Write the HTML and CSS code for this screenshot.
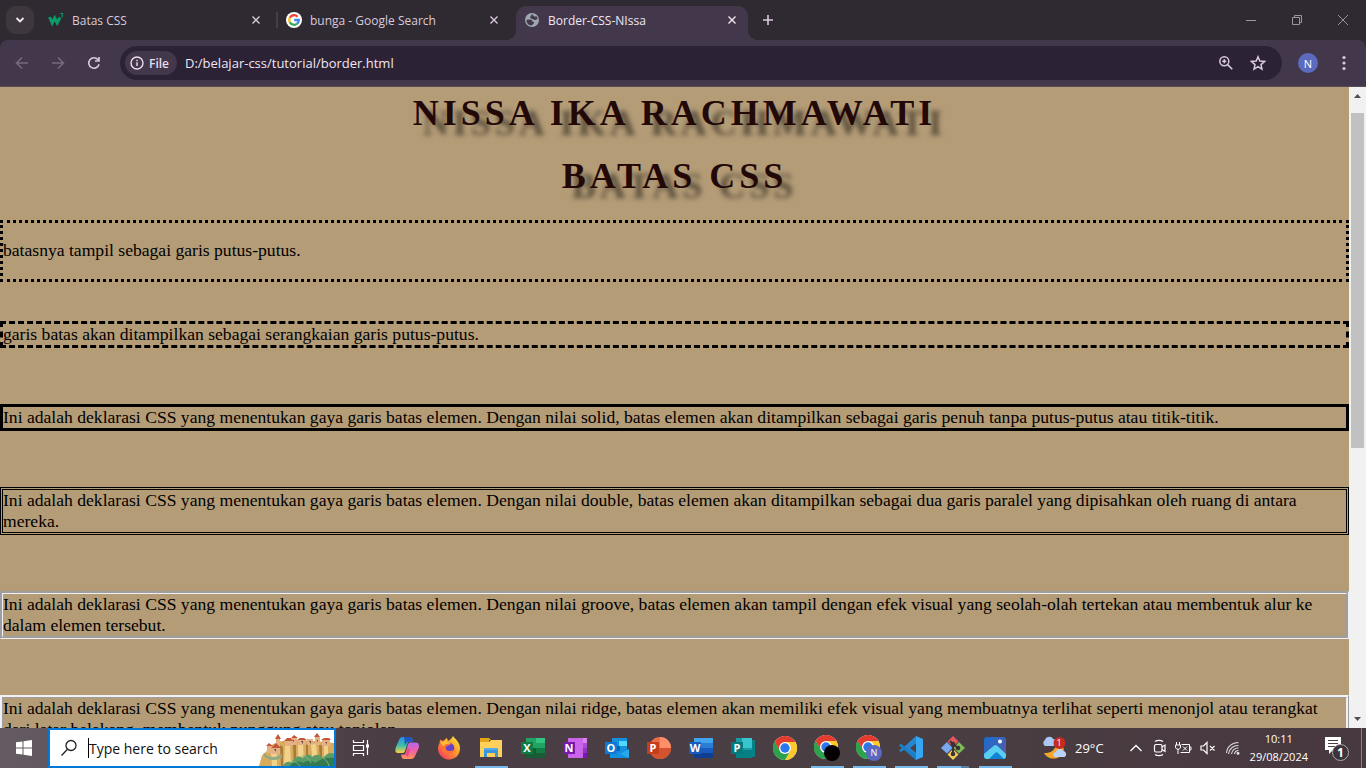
FILE: index.html
```html
<!DOCTYPE html>
<html lang="id">
<head>
<meta charset="utf-8">
<title>Border-CSS-NIssa</title>
<link rel="stylesheet" href="styles.css">
</head>
<body>
<svg class="defs" aria-hidden="true">
  <defs>
    <symbol id="close" viewBox="0 0 16 16"><path d="M4.500 4.500l7 7M11.500 4.500l-7 7" fill="none" stroke="currentColor" stroke-width="1.400"/></symbol>
    <symbol id="chrome" viewBox="0 0 24 24">
      <circle cx="12" cy="12" r="12" fill="#fff"/>
      <path d="M12 12L1.600 6A12 12 0 0 1 22.400 6H12z" fill="#e33b2e"/>
      <path d="M12 12L22.400 6A12 12 0 0 1 12 24l5.200-9z" fill="#fdc92b"/>
      <path d="M12 12l5.200 3L12 24A12 12 0 0 1 1.600 6l5.200 9z" fill="#2da14c"/>
      <path d="M12 6h10.400L17 15z" fill="#fdc92b"/><path d="M1.600 6L6.800 15 12 6z" fill="#e33b2e"/>
      <path d="M1.600 6l5.200 9 5.200 3-5 4.900A12 12 0 0 1 1.600 6z" fill="#2da14c"/>
      <circle cx="12" cy="12" r="6" fill="#fff"/><circle cx="12" cy="12" r="4.700" fill="#2b78ea"/>
    </symbol>
  </defs>
</svg>

<header class="browser">
  <div class="tabstrip">
    <button class="tab-search" aria-label="Search tabs"><svg width="12" height="12" viewBox="0 0 12 12"><path d="M2.500 4l3.500 3.500L9.500 4" fill="none" stroke="currentColor" stroke-width="1.800"/></svg></button>
    <div class="tab">
      <svg class="favicon" viewBox="0 0 16 16"><path d="M1.500 5l2.700 6 2.500-5 2.500 5L12 5.500" fill="none" stroke="#0a9b68" stroke-width="3"/><path d="M12.500 1.500h2.500l-1.300 1.700c2 0 1.700 2.300-.9 1.700" fill="none" stroke="#0a9b68"/></svg>
      <span class="tab-title">Batas CSS</span>
      <button class="tab-close" aria-label="Close tab"><svg width="16" height="16"><use href="#close"/></svg></button>
    </div>
    <div class="tab tab-divided">
      <svg class="favicon" viewBox="0 0 16 16"><circle cx="8" cy="8" r="8" fill="#fff"/><g fill="none" stroke-width="2.300"><path d="M11.500 4.700A4.800 4.800 0 0 0 3.800 5.700" stroke="#ea4335"/><path d="M3.800 5.700a4.800 4.800 0 0 0 0 4.600" stroke="#fbbc05"/><path d="M3.800 10.300a4.800 4.800 0 0 0 7.300 1.400" stroke="#34a853"/><path d="M11.100 11.700A4.800 4.800 0 0 0 12.800 8H8.200" stroke="#4285f4"/></g></svg>
      <span class="tab-title">bunga - Google Search</span>
      <button class="tab-close" aria-label="Close tab"><svg width="16" height="16"><use href="#close"/></svg></button>
    </div>
    <div class="tab tab-active">
      <svg class="favicon" viewBox="0 0 16 16"><circle cx="8" cy="8" r="7" fill="#9da7ad"/><path d="M2.500 7.800c2 .2 2.500-.8 4.500-.1s.5 2 2.500 2.200-.5 2.200-2 3.600c-2.800-.2-5.300-2.400-5-5.700zM7.500 2.500c2.500-.2 1 1.700 3 2s2.500-.7 3 2c-1 2-3 1.500-4.500.8S6 6.500 6.300 5s1-.8 1.200-2.500z" fill="#43384b"/></svg>
      <span class="tab-title">Border-CSS-NIssa</span>
      <button class="tab-close" aria-label="Close tab"><svg width="16" height="16"><use href="#close"/></svg></button>
    </div>
    <button class="new-tab" aria-label="New tab"><svg width="16" height="16" viewBox="0 0 16 16"><path d="M8 3v10M3 8h10" stroke="currentColor" stroke-width="1.600"/></svg></button>
    <div class="window-buttons">
      <button aria-label="Minimize"><svg width="12" height="12"><path d="M1 6.500h10" stroke="currentColor"/></svg></button>
      <button aria-label="Restore"><svg width="12" height="12"><path d="M1.500 3.500h7v7h-7zM3.500 3.500v-2h7v7h-2" fill="none" stroke="currentColor"/></svg></button>
      <button aria-label="Close"><svg width="12" height="12"><path d="M1 1l10 10M11 1L1 11" stroke="currentColor"/></svg></button>
    </div>
  </div>
  <div class="toolbar">
    <button class="tool tool-off" aria-label="Back"><svg width="16" height="16" viewBox="0 0 16 16"><path d="M14 8H3M8 2.500L2.500 8 8 13.500" fill="none" stroke="currentColor" stroke-width="1.600"/></svg></button>
    <button class="tool tool-off" aria-label="Forward"><svg width="16" height="16" viewBox="0 0 16 16"><path d="M2 8h11M8 2.500L13.500 8 8 13.500" fill="none" stroke="currentColor" stroke-width="1.600"/></svg></button>
    <button class="tool" aria-label="Reload"><svg width="16" height="16" viewBox="0 0 16 16"><path d="M13 9.200A5.200 5.200 0 1 1 12 4.700M13 2v4H9" fill="none" stroke="currentColor" stroke-width="1.600"/></svg></button>
    <div class="omnibox">
      <button class="file-chip"><svg width="14" height="14" viewBox="0 0 14 14"><circle cx="7" cy="7" r="6" fill="none" stroke="currentColor" stroke-width="1.400"/><path d="M7 6.300V10M7 3.800v1.400" stroke="currentColor" stroke-width="1.400"/></svg>File</button>
      <input class="url" aria-label="Address" value="D:/belajar-css/tutorial/border.html">
      <button class="omni-tool" aria-label="Zoom"><svg width="16" height="16" viewBox="0 0 16 16"><circle cx="6.300" cy="6.300" r="4.500" fill="none" stroke="currentColor" stroke-width="1.500"/><path d="M9.600 9.600l4.700 4.700M6.300 4.300v4M4.300 6.300h4" stroke="currentColor" stroke-width="1.600"/></svg></button>
      <button class="omni-tool" aria-label="Bookmark"><svg width="16" height="16" viewBox="0 0 16 16"><path d="M8 1.800l1.800 4.300 4.700.4-3.500 3.100 1 4.600-4-2.500-4 2.500 1-4.600L1.500 6.500l4.700-.4z" fill="none" stroke="currentColor" stroke-width="1.500"/></svg></button>
    </div>
    <button class="profile">N</button>
    <button class="menu" aria-label="Menu"><svg width="16" height="16" fill="currentColor"><circle cx="8" cy="2.500" r="1.600"/><circle cx="8" cy="8" r="1.600"/><circle cx="8" cy="13.500" r="1.600"/></svg></button>
  </div>
</header>

<div class="viewport">
  <main class="page">
    <div class="titles">
      <h1>NISSA IKA RACHMAWATI</h1>
      <h1>BATAS CSS</h1>
    </div>
    <div class="box dotted"><p>batasnya tampil sebagai garis putus-putus.</p></div>
    <div class="samples">
      <p class="box dashed">garis batas akan ditampilkan sebagai serangkaian garis putus-putus.</p>
      <p class="box solid">Ini adalah deklarasi CSS yang menentukan gaya garis batas elemen. Dengan nilai solid, batas elemen akan ditampilkan sebagai garis penuh tanpa putus-putus atau titik-titik.</p>
      <p class="box double">Ini adalah deklarasi CSS yang menentukan gaya garis batas elemen. Dengan nilai double, batas elemen akan ditampilkan sebagai dua garis paralel yang dipisahkan oleh ruang di antara mereka.</p>
      <p class="box groove">Ini adalah deklarasi CSS yang menentukan gaya garis batas elemen. Dengan nilai groove, batas elemen akan tampil dengan efek visual yang seolah-olah tertekan atau membentuk alur ke dalam elemen tersebut.</p>
      <p class="box ridge">Ini adalah deklarasi CSS yang menentukan gaya garis batas elemen. Dengan nilai ridge, batas elemen akan memiliki efek visual yang membuatnya terlihat seperti menonjol atau terangkat dari latar belakang, membentuk punggung atau tonjolan.</p>
    </div>
  </main>
  <div class="scrollbar">
    <svg width="17" height="17"><path d="M5 11l3.500-4 3.500 4z" fill="#505050"/></svg>
    <div class="track"><div class="thumb"></div></div>
    <svg width="17" height="17"><path d="M5 6l3.500 4L12 6z" fill="#505050"/></svg>
  </div>
</div>

<footer class="taskbar">
  <button class="start" aria-label="Start"><svg width="16" height="16" fill="#fff"><path d="M0 2.300l6.500-.9v6.100H0zM7.500 1.200L16 0v7.500H7.500zM0 8.500h6.500v6.100L0 13.700zM7.500 8.500H16V16l-8.500-1.200z"/></svg></button>
  <label class="search">
    <svg width="18" height="18" viewBox="0 0 18 18"><circle cx="11" cy="6.500" r="5" fill="none" stroke="#222" stroke-width="1.300"/><path d="M7.500 10.200L1.500 16.500" stroke="#222" stroke-width="1.300"/></svg>
    <span class="caret"></span>
    <input type="text" placeholder="Type here to search" aria-label="Search">
    <svg class="castle" width="76" height="34" viewBox="0 0 76 34">
      <path d="M1 34C4 25 3 22 8 20c2-6 8-9 16-11l15-1 18 1 19 2v23z" fill="#d9ab5c"/>
      <path d="M13 20l6-6v20h-5zM27 13l5-2 1 23h-7zM40 11l5-1 1 24h-6zM53 13l5-2 2 23h-5zM66 13l4 1v20h-4z" fill="#f0d28a"/>
      <path d="M22 13l3 2v19h-2zM35 12l3 1v21h-2zM48 12l2 1v21h-2zM61 12l3 2v20h-2z" fill="#a87a3b"/>
      <path d="M6 21c5 5 12 5 18 1v4c-7 3-14 3-18-2z" fill="#91a984"/>
      <path d="M9 14h5v7H9zM14 15l4-3 4 3v7h-8zM18 7h4v8h-4zM27 9h7v5h-7zM34 6h5v7h-5zM40 8h8v5h-8zM49 7h6v6h-6zM57 5h5v8h-5zM64 8h8v6h-8z" fill="#e3b184"/>
      <path d="M8 14l3-3 4 3zM13 16l5-5 5 5zM17 7l3-5 3 5zM26 9l3-3h4l2 3zM33 6l3-3 4 3zM39 8l3-2h4l3 2zM56 5l3-4 3 4zM63 8l3-2h5l2 2z" fill="#c4553a"/>
      <path d="M35 8h1v3M43 9h2v3M51 9h2v3M59 8h1v3M16 17h2v3M67 10h2v2" fill="#694536"/>
      <path d="M25 34c2-5 7-5 9-3 1-7 8-8 11-5 2-4 7-5 9-1 5-4 9-2 11 1 4-5 8-6 11-4v12z" fill="#5a9b68"/>
      <path d="M32 34c2-4 8-6 13-3 4-3 9-3 12 0 6-5 13-6 19-5v8z" fill="#347a50"/>
      <path d="M44 24c4 0 7 3 9 7M65 26c3 2 5 4 6 8M34 30c3-1 6 1 8 4" fill="none" stroke="#7db783"/>
    </svg>
  </label>
  <button class="task-view" aria-label="Task view"><svg width="18" height="18" fill="none" stroke="#fff" stroke-width="1.200"><path d="M1.500 1v2.500h10V1M1.500 6.500h10v5h-10zM1.500 17v-2.500h10V17M15.500 1v15"/><path d="M14 5.500h3v3h-3z" fill="#fff" stroke="none"/></svg></button>
  <nav class="apps">
    <button aria-label="Copilot"><svg width="24" height="24" viewBox="0 0 24 24"><defs><linearGradient id="cpa" x2="0" y2="1"><stop stop-color="#2490ea"/><stop offset=".55" stop-color="#41c0a5"/><stop offset="1" stop-color="#ffd23e"/></linearGradient><linearGradient id="cpb" x2="0" y2="1"><stop stop-color="#b268ed"/><stop offset=".5" stop-color="#f260a6"/><stop offset="1" stop-color="#ff9456"/></linearGradient></defs><path d="M8 1h7c2 0 2.500 2 3 4l-5 1-3 9c-.5 1.500-1.500 2-3 2H3C0 17 0 14 1 11l3-7c.7-2 2-3 4-3z" fill="url(#cpa)"/><path d="M9 1h6c2 0 2.600 2 3 4.500h-4c-2 0-3 2-4 4z" fill="#2255c4"/><path d="M16 23H9c-2 0-2.500-2-3-4.500h4l3-10c.7-2 2-2 4-2h4c3 0 3.500 3 2.600 6L20 20c-.7 2-2 3-4 3z" fill="url(#cpb)"/><path d="M10 18.500l2-6 3 .5-2 8z" fill="#e64b86"/></svg></button>
    <button aria-label="Firefox"><svg width="24" height="24" viewBox="0 0 24 24"><defs><linearGradient id="ff" x1="1" x2="0" y2="1"><stop stop-color="#fff04a"/><stop offset=".4" stop-color="#ffa126"/><stop offset="1" stop-color="#f5286b"/></linearGradient></defs><path d="M16 0c2 3 7 6 7 12.500A11 11 0 1 1 2.500 7L3 3.500 6 5l4-3 1 3c2-1 4-3 5-5z" fill="url(#ff)"/><circle cx="12" cy="12" r="5.300" fill="#6742c7"/><path d="M3 7c3-1 5-1 7 0l4 1c-2 2-4 1-5 3s1 4 4 4c2 0 3-1 5-1-1 4-8 6-12 2C3 13 2 10 3 7z" fill="#ff7436"/><path d="M3 6l4-.5L10 2v4l4 2H9L6 10z" fill="#ffbd35"/></svg></button>
    <button class="running" aria-label="File Explorer"><svg width="24" height="24" viewBox="0 0 24 24"><path d="M1 2h9l2 2h-2v4H1z" fill="#e4a514"/><path d="M1 6h9l2-2h11v17H1z" fill="#ffd15b"/><path d="M5 12h14v9h-3v-4H8v4H5z" fill="#3b94dc"/><path d="M5 12h14v2H5z" fill="#53acee"/></svg></button>
    <button aria-label="Excel"><svg width="26" height="24" viewBox="0 0 26 24"><path d="M6 2h19v20H6z" fill="#21a366"/><path d="M16 2h9v5h-9z" fill="#33c481"/><path d="M6 12h10v5H6zM6 17h19v5H6z" fill="#185c37"/><path d="M16 12h9v5h-9z" fill="#107c41"/><path d="M1 6h12v12H1z" fill="#107c41"/><text x="7" y="16" class="letter">X</text></svg></button>
    <button aria-label="OneNote"><svg width="26" height="24" viewBox="0 0 26 24"><path d="M6 2h19v20H6z" fill="#ca64ea"/><path d="M21 2h4v5h-4z" fill="#dc83f2"/><path d="M21 7h4v5h-4z" fill="#ae4bd5"/><path d="M21 12h4v5h-4z" fill="#9332bf"/><path d="M21 17h4v5h-4z" fill="#7719aa"/><path d="M1 6h12v12H1z" fill="#7719aa"/><text x="7" y="16" class="letter">N</text></svg></button>
    <button aria-label="Outlook"><svg width="26" height="24" viewBox="0 0 26 24"><path d="M8 2h15v17H8z" fill="#1490df"/><path d="M15 5h8v5h-8z" fill="#50d9ff"/><path d="M8 10h8v5H8z" fill="#0364b8"/><path d="M6 13l10 5 9-5v9H6z" fill="#28a8ea"/><path d="M6 13l19 9H6z" fill="#1490df"/><path d="M1 6h12v12H1z" fill="#0f78d4"/><text x="7" y="16" class="letter">O</text></svg></button>
    <button aria-label="PowerPoint"><svg width="26" height="24" viewBox="0 0 26 24"><circle cx="14" cy="12" r="11" fill="#ed6c47"/><path d="M14 1a11 11 0 0 1 11 11H14z" fill="#ff8f6b"/><path d="M3 12h22a11 11 0 0 1-22 0z" fill="#d35230"/><path d="M1 6h12v12H1z" fill="#c43e1c"/><text x="7" y="16" class="letter">P</text></svg></button>
    <button aria-label="Word"><svg width="26" height="24" viewBox="0 0 26 24"><path d="M6 2h19v5H6z" fill="#41a5ee"/><path d="M6 7h19v5H6z" fill="#2b7cd3"/><path d="M6 12h19v5H6z" fill="#185abd"/><path d="M6 17h19v5H6z" fill="#103f91"/><path d="M1 6h12v12H1z" fill="#185abd"/><text x="7" y="16" class="letter">W</text></svg></button>
    <button aria-label="Publisher"><svg width="26" height="24" viewBox="0 0 26 24"><path d="M20 4h5v17h-5z" fill="#038387"/><path d="M6 2h16v20H6z" fill="#1a9ba1"/><path d="M12 2h10v10H12z" fill="#37c6d0"/><path d="M6 14h16v8H6z" fill="#058186"/><path d="M1 6h12v12H1z" fill="#04797c"/><text x="7" y="16" class="letter">P</text></svg></button>
    <button aria-label="Chrome"><svg width="24" height="24"><use href="#chrome"/></svg></button>
    <button class="running" aria-label="Chrome profile 1"><svg width="26" height="26" viewBox="0 0 26 26"><use href="#chrome" width="24" height="24"/><circle cx="18" cy="18" r="8" fill="#030104"/></svg></button>
    <button class="running" aria-label="Chrome profile N"><svg width="26" height="26" viewBox="0 0 26 26"><use href="#chrome" width="24" height="24"/><circle cx="18" cy="18" r="8" fill="#5b68c0"/><text x="18" y="21" class="badge-letter">N</text></svg></button>
    <button class="running" aria-label="Visual Studio Code"><svg width="26" height="26" viewBox="0 0 26 26"><path d="M18 1L6.500 11.500 3 9 1 10.500 4 13l-3 2.500L3 17l3.500-2.500L18 25l2-8V9z" fill="#2687d0"/><path d="M18 1l7 3v18l-7 3V17l-6-4 6-4z" fill="#36a6f2"/><path d="M1 10.500L3 9l15 11v5z" fill="#197fc6"/><path d="M18 8.500V18l-6-5z" fill="#493f44"/></svg></button>
    <button class="running running-multi" aria-label="Git"><svg width="26" height="26" viewBox="0 0 26 26"><path d="M13 1l5.500 5.500L13 12 7.500 6.500z" fill="#e8565b"/><path d="M7 7l5.500 6L7 18.500 1 13z" fill="#79a9ef"/><path d="M19 7l6 6-6 5.500-5.500-5.500z" fill="#7cbd55"/><path d="M13 14l5.500 5.500L13 25l-5.500-5.500z" fill="#f2cd57"/><path d="M10 6l3 3v10M13 9l5 4" fill="none" stroke="#3c3236" stroke-width="2"/><g fill="#3c3236"><circle cx="13" cy="9" r="2.300"/><circle cx="18" cy="13" r="2.300"/><circle cx="13" cy="19" r="2.300"/></g></svg></button>
    <button class="running" aria-label="Photos"><svg width="24" height="24" viewBox="0 0 24 24"><defs><linearGradient id="ph" x2="1" y2="1"><stop stop-color="#176dce"/><stop offset="1" stop-color="#6257a7"/></linearGradient></defs><rect x="1" y="1" width="22" height="22" rx="3" fill="url(#ph)"/><path d="M1 18L11 9.500c1-.8 2-.8 3 0L23 18v2c0 2-1 3-3 3H4c-2 0-3-1-3-3z" fill="#56cff1"/><path d="M6 23l6-6c1-1 2-1 3 0l6 6z" fill="#1384d5"/><circle cx="17" cy="5.500" r="2" fill="#fff"/></svg></button>
  </nav>
  <div class="tray">
    <button class="weather"><svg width="26" height="24" viewBox="0 0 26 24"><path d="M15 5c1 8-4 12-12 12 3 6 12 8 18 2 4-5 1-12-6-14z" fill="#f5a52a"/><path d="M4 10a3.500 3.500 0 0 1 0-6c1-4 7-4 8-1 4 0 4 7 0 7z" fill="#a9c9f4"/><path d="M14 21c-3-1-2-5 1-5 1-4 6-4 7-1 4 0 4 6 1 6z" fill="#b9d4f8"/><circle cx="18.500" cy="7" r="6" fill="#c62a20"/><text x="18" y="10" class="alert">1</text></svg>29°C</button>
    <button class="tray-icon" aria-label="Show hidden icons"><svg width="14" height="14"><path d="M1.500 10L7 4.500l5.500 5.500" fill="none" stroke="#fff" stroke-width="1.300"/></svg></button>
    <button class="tray-icon" aria-label="Meet now"><svg width="14" height="18" viewBox="0 0 14 18" fill="none" stroke="#fff" stroke-width="1.200"><rect x="1.500" y="5.500" width="7.500" height="7.500" rx="1.500"/><path d="M9 8l3-2v6.500l-3-2M2 2.500c2-1.500 6-1.500 8 0M2 15.500c2 1.500 6 1.500 8 0"/></svg></button>
    <button class="tray-icon" aria-label="Battery"><svg width="17" height="14" viewBox="0 0 17 14" fill="none" stroke="#fff"><path d="M6.500 3.500h8v8h-9M14.500 6h1.500v3h-1.500M1.500 1v3M4.500 1v3M.5 4h5v2c0 3-5 3-5 0zM3 8v5M8 5.500l4 4M12 5.500l-4 4"/></svg></button>
    <button class="tray-icon" aria-label="Volume muted"><svg width="16" height="14" viewBox="0 0 16 14" fill="none" stroke="#fff" stroke-width="1.200"><path d="M1 5h2.500L7 1.500v11L3.500 9H1zM10 5l4.500 4.500M14.500 5L10 9.500"/></svg></button>
    <button class="tray-icon network" aria-label="Network"><svg width="14" height="14" viewBox="0 0 14 14" fill="none" stroke="#ddd" stroke-width="1.100"><path d="M2.500 13A9.500 9.500 0 0 1 12.500 4.500M5.500 13A6.500 6.500 0 0 1 12.500 7M8.500 13a4 4 0 0 1 4-3.500M.5 12C1 5.500 6 1.500 12.500 1.500"/><circle cx="12" cy="12.200" r="1" fill="#fff"/></svg></button>
    <div class="clock"><time>10:11</time><time datetime="2024-08-29">29/08/2024</time></div>
    <button class="notify" aria-label="Notifications"><svg width="26" height="28" viewBox="0 0 26 28"><path d="M1 3h16v13H9l-4 4v-4H1z" fill="#fff"/><path d="M4 6.500h10M4 9.500h10M4 12.500h7" stroke="#493f44"/><circle cx="16.500" cy="18.500" r="8" fill="#3b3438" stroke="#aaa"/><text x="16.500" y="23" class="count">1</text></svg></button>
    <button class="show-desktop" aria-label="Show desktop"></button>
  </div>
</footer>
</body>
</html>
```
FILE: styles.css
```css
* { box-sizing: border-box; }
body {
  margin: 0;
  height: 100vh;
  display: flex;
  flex-direction: column;
  overflow: hidden;
  font-family: "Open Sans", "Noto Sans", sans-serif;
  background: #b49c77;
}
button {
  border: 0;
  padding: 0;
  margin: 0;
  background: none;
  color: inherit;
  font: inherit;
  display: flex;
  align-items: center;
  justify-content: center;
  flex: none;
}
input { border: 0; padding: 0; background: none; outline: 0; font: inherit; min-width: 0; }
svg { display: block; flex: none; }
.defs { width: 0; height: 0; position: absolute; }

.browser { flex: none; background: #2f2932; color: #d9c9dc; }
.tabstrip { height: 40px; display: flex; padding: 0 0 0 6px; }
.tab-search {
  width: 28px;
  height: 28px;
  margin: 6px 4px 0 0;
  border-radius: 10px;
  background: #3e383e;
  color: #f0e8f0;
}
.tab {
  width: 238px;
  height: 34px;
  margin-top: 6px;
  padding: 0 12px 0 10px;
  display: flex;
  align-items: center;
  font-size: 12px;
  line-height: 16px;
}
.favicon { width: 16px; height: 16px; margin-bottom: 6px; }
.tab-title { flex: 1; margin: 0 0 4px 8px; white-space: nowrap; }
.tab-close { margin-bottom: 6px; }
.tab-divided { background: linear-gradient(#463e49, #463e49) 0 6px / 2px 16px no-repeat; }
.tab-active {
  width: 232px;
  margin-left: 2px;
  padding: 0 8px;
  border-radius: 10px 10px 0 0;
  background: #43384b;
  color: #f0e6f2;
  position: relative;
}
.tab-active::before,
.tab-active::after {
  content: "";
  position: absolute;
  bottom: 0;
  width: 10px;
  height: 10px;
}
.tab-active::before { right: 100%; background: radial-gradient(circle at 0 0, transparent 10px, #43384b 10px); }
.tab-active::after { left: 100%; background: radial-gradient(circle at 100% 0, transparent 10px, #43384b 10px); }
.new-tab { width: 28px; height: 28px; margin: 6px; }
.window-buttons { display: flex; margin-left: auto; color: #9c949e; }
.window-buttons button { width: 46px; height: 40px; }

.toolbar {
  display: flex;
  align-items: center;
  height: 47px;
  padding: 0 8px;
  background: #43384b;
  border-bottom: 1px solid #5a4d57;
  border-radius: 8px 8px 0 0;
}
.tool { width: 28px; height: 28px; margin-right: 8px; }
.tool-off { color: #77697d; }
.omnibox {
  flex: 1;
  height: 34px;
  display: flex;
  align-items: center;
  padding: 0 16px 0 5px;
  margin-left: 4px;
  border-radius: 17px;
  background: #2c2235;
}
.file-chip {
  height: 24px;
  padding: 0 8px 0 5px;
  gap: 5px;
  border-radius: 12px;
  background: #43384b;
  font-size: 12px;
  font-weight: 600;
  color: #eadded;
}
.url { flex: 1; margin-left: 8px; font-size: 13px; color: #f0e6f4; }
.omni-tool { margin-left: 16px; }
.profile {
  width: 20px;
  height: 20px;
  margin-left: 16px;
  border-radius: 50%;
  background: #5c6bc0;
  color: #fff;
  font-size: 11px;
}
.menu { margin: 0 6px 0 18px; }

.viewport { flex: 1; min-height: 0; display: flex; }
.page {
  flex: 1;
  min-width: 0;
  overflow: hidden;
  padding-top: 5px;
  font-family: "Liberation Serif", "Times New Roman", serif;
  font-size: 110%;
  line-height: 21px;
  color: #000;
}
.titles { display: grid; gap: 21px; margin-bottom: 23px; text-align: center; color: #230808; }
h1 {
  margin: 0;
  font-size: 36px;
  line-height: 42px;
  letter-spacing: 4px;
  text-shadow: 10px 10px 5px rgba(0, 0, 0, 0.5);
}
.box { margin: 0; border: 3px solid #000; }
.dotted { border-style: dotted; margin-bottom: 39px; padding: 17px 0 18px; }
.dotted p { margin: 0; }
.samples { display: grid; gap: 56px; }
.dashed { border-style: dashed; }
.double { border-style: double; }
.groove { border: 3px groove #f0f0f5; }
.ridge { border: 3px ridge #f0f0f5; }

.scrollbar { width: 17px; display: flex; flex-direction: column; background: #f1f1f1; }
.track { flex: 1; padding: 9px 2px 0; }
.thumb { height: 56%; background: #c1c1c1; }

.taskbar {
  flex: none;
  height: 40px;
  display: flex;
  align-items: stretch;
  background: linear-gradient(90deg, #645b63, #4b3d44 28%, #493f43 60%, #48383f);
  color: #fff;
}
.start { width: 48px; }
.search {
  width: 288px;
  display: flex;
  align-items: center;
  background: #fff;
  border: 2px solid #0078d7;
  padding-left: 10px;
}
.search input { flex: 1; font-size: 14px; color: #111; }
.search input::placeholder { color: #111; opacity: 1; }
.caret { width: 1px; height: 20px; margin-left: 10px; background: #000; }
.castle { align-self: flex-end; }
.task-view { width: 50px; }
.apps { display: flex; }
.apps button { width: 42px; }
.running {
  background: linear-gradient(#76b9ed, #76b9ed) center bottom / 33px 2px no-repeat;
}
.running-multi {
  background:
    linear-gradient(#76b9ed, #76b9ed) 5px 100% / 24px 2px no-repeat,
    linear-gradient(#56809e, #56809e) 29px 100% / 8px 2px no-repeat;
}
.letter, .badge-letter, .alert, .count { fill: #fff; text-anchor: middle; font-weight: 700; font-size: 11px; }
.badge-letter { font-size: 9px; font-weight: 400; }
.alert { font-size: 9px; font-weight: 400; }
.count { font-size: 12px; }
.tray { display: flex; margin-left: auto; align-items: stretch; }
.weather { gap: 8px; margin-right: 20px; font-size: 13px; }
.tray-icon { width: 24px; }
.network { width: 26px; }
.clock {
  display: flex;
  flex-direction: column;
  align-items: center;
  justify-content: center;
  margin: 0 14px 0 4px;
  font-size: 11px;
  line-height: 18px;
}
.notify { width: 30px; margin-right: 9px; }
.show-desktop { width: 5px; border-left: 1px solid #8b8186; }
```
